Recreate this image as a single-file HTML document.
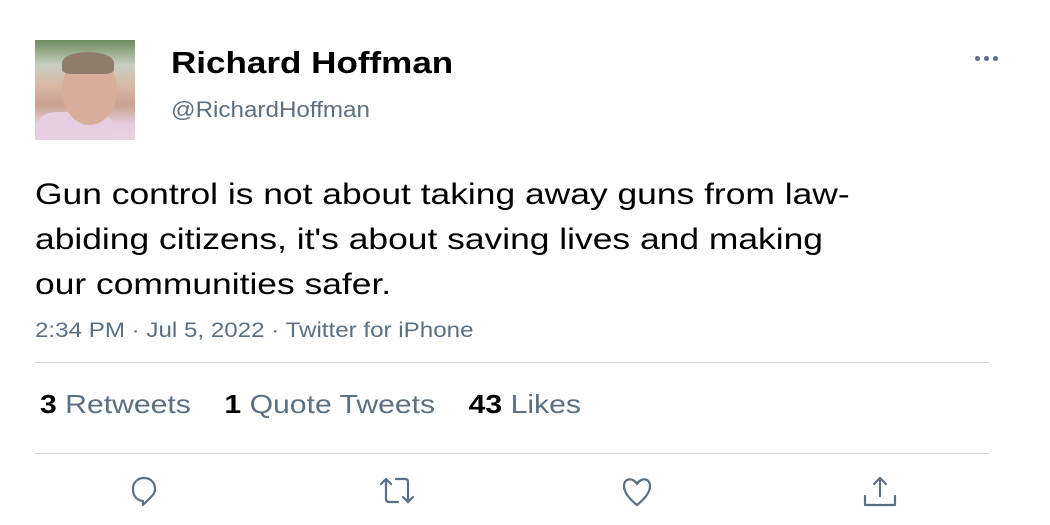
<!DOCTYPE html>
<html><head><style>
body{margin:0;width:1050px;height:525px;background:#fff;font-family:"Liberation Sans",sans-serif;position:relative;overflow:hidden}
.a{position:absolute;transform-origin:0 0;white-space:nowrap}
.av{left:35px;top:40px;width:100px;height:100px;background:linear-gradient(180deg,#6d8b5a 0%,#c8cfc2 25%,#d9b9a6 45%,#c9a290 65%,#e6cde0 85%,#e8d2e2 100%)}
.face{left:62px;top:55px;width:55px;height:70px;border-radius:50%;background:#d8ae9a}
.hair{left:62px;top:52px;width:52px;height:22px;border-radius:50% 50% 20% 20%;background:#8f7c6a}
.sh{left:35px;top:112px;width:80px;height:28px;background:#e5cfe0;border-radius:20px 20px 0 0}
.name{left:171px;top:45px;font-size:31px;font-weight:bold;color:#000;transform:scaleX(1.13)}
.handle{left:171px;top:97px;font-size:22px;color:#5b7083;transform:scaleX(1.1)}
.dots{left:975px;top:48px}
.dots i{display:inline-block;width:5px;height:5px;border-radius:50%;background:#5b7083;margin-right:4px}
.txt{left:35px;top:172px;font-size:30px;line-height:45px;color:#000;transform:scaleX(1.18)}
.meta{left:35px;top:319px;font-size:21px;color:#5b7083;transform:scaleX(1.15)}
.hr{left:35px;width:954px;height:1px;background:#d6dadd}
.st{left:40px;top:389px;font-size:26px;color:#5b7083;transform:scaleX(1.16)}
.st b{color:#000}
svg{position:absolute;fill:none;stroke:#5b7083;stroke-width:2.2;stroke-linecap:round;stroke-linejoin:round}
</style></head><body>
<div class="a av"></div><div class="a sh"></div><div class="a face"></div><div class="a hair"></div>
<div class="a name">Richard Hoffman</div>
<div class="a handle">@RichardHoffman</div>
<div class="a dots"><i></i><i></i><i></i></div>
<div class="a txt">Gun control is not about taking away guns from law-<br>abiding citizens, it's about saving lives and making<br>our communities safer.</div>
<div class="a meta">2:34 PM · Jul 5, 2022 · Twitter for iPhone</div>
<div class="a hr" style="top:362px"></div>
<div class="a st"><b>3</b> Retweets&nbsp;&nbsp;&nbsp; <b>1</b> Quote Tweets&nbsp;&nbsp;&nbsp; <b>43</b> Likes</div>
<div class="a hr" style="top:453px"></div>
<svg style="left:130px;top:475px" width="30" height="32" viewBox="0 0 30 32"><path d="M13 26 C5 25 3 19 3 14 C3 7 8 3 14 3 C21 3 25 8 25 14 C25 18 23 20 20 23 L13 30 Z"/></svg>
<svg style="left:376px;top:475px" width="42" height="32" viewBox="0 0 42 32"><path d="M5 9 L10 4 L15 9 M10 4 V24 Q10 27 13 27 H22 M20 4 H29 Q32 4 32 7 V27 M27 22 L32 27 L37 22"/></svg>
<svg style="left:620px;top:475px" width="34" height="34" viewBox="0 0 34 34"><path d="M17 9 C13 2 4 3 4 11 C4 19 12 26 17 30 C22 26 30 19 30 11 C30 3 21 2 17 9 Z"/></svg>
<svg style="left:860px;top:474px" width="40" height="36" viewBox="0 0 40 36"><path d="M20 4 V22 M14 10 L20 4 L26 10 M5 22 V31 H35 V22"/></svg>
</body></html>
